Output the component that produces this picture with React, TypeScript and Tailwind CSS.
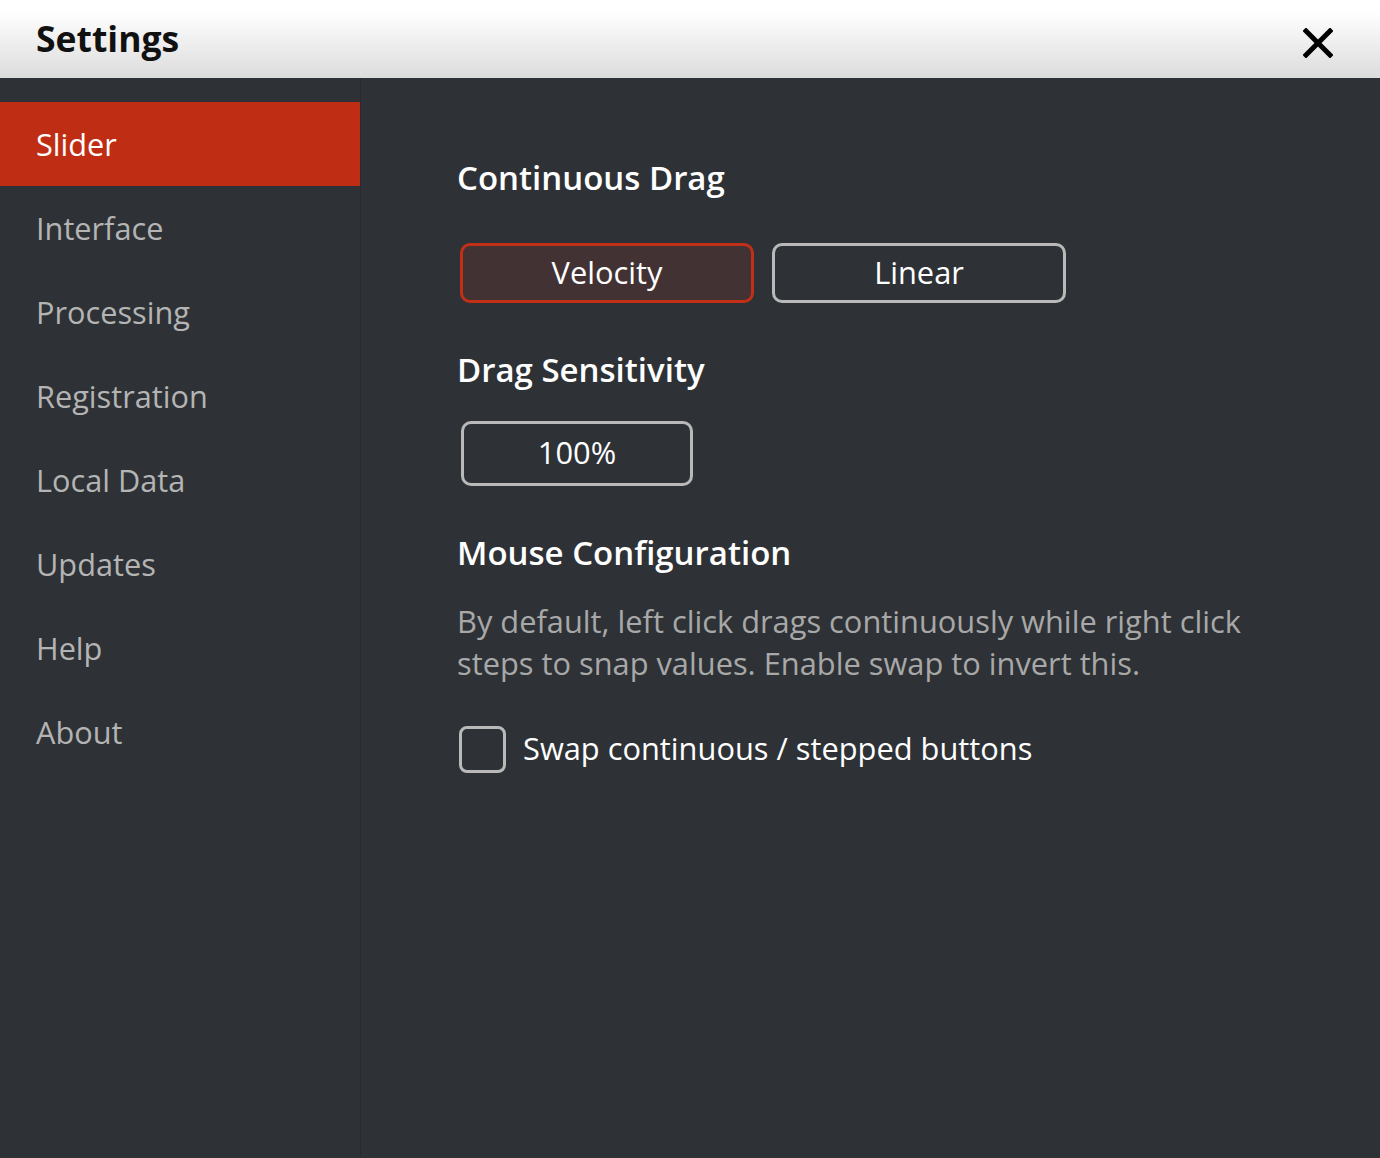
import { useState } from 'react';

const items = ['Slider', 'Interface', 'Processing', 'Registration', 'Local Data', 'Updates', 'Help', 'About'];

export default function App() {
  const [active, setActive] = useState('Slider');
  const [mode, setMode] = useState<'velocity' | 'linear'>('velocity');
  const [swap, setSwap] = useState(false);

  return (
    <div className="flex h-[1158px] w-[1380px] flex-col bg-[#2e3236] font-['Open_Sans',sans-serif]">
      {/* Header */}
      <header className="flex h-[78px] shrink-0 items-center justify-between bg-gradient-to-b from-white from-[15%] to-[#dcdcdc] pl-[36px] pr-[47px]">
        <h1 className="text-[35.5px] font-bold text-[#111]">Settings</h1>
        <button className="mt-[8px] text-black">
          <svg width="30" height="30" viewBox="0 0 30 30">
            <path d="M3 3 L27 27 M27 3 L3 27" stroke="currentColor" strokeWidth="5" strokeLinecap="square" />
          </svg>
        </button>
      </header>

      <div className="flex flex-1">
        {/* Sidebar */}
        <nav className="w-[361px] shrink-0 border-r border-[#272a2e] pt-6">
          {items.map((item) => (
            <button
              key={item}
              onClick={() => setActive(item)}
              className={
                'flex h-[84px] w-full items-center pl-[36px] text-left text-[30.7px] ' +
                (active === item ? 'bg-[#bf2e14] text-white' : 'text-[#b4b4b4]')
              }
            >
              {item}
            </button>
          ))}
        </nav>

        {/* Content */}
        <main className="flex-1 pl-[96px] pt-[74px]">
          <h2 className="text-[33px] font-semibold leading-[52px] text-white">Continuous Drag</h2>
          <div className="ml-[3px] mt-[39px] flex gap-[18px]">
            <button
              onClick={() => setMode('velocity')}
              className={
                'h-[60px] w-[294px] rounded-[10px] border-[3px] pb-[2px] text-[30.8px] text-white ' +
                (mode === 'velocity' ? 'border-[#c12f17] bg-[#433234]' : 'border-[#b9b9b9]')
              }
            >
              Velocity
            </button>
            <button
              onClick={() => setMode('linear')}
              className={
                'h-[60px] w-[294px] rounded-[10px] border-[3px] pb-[2px] text-[30.8px] text-white ' +
                (mode === 'linear' ? 'border-[#c12f17] bg-[#433234]' : 'border-[#b9b9b9]')
              }
            >
              Linear
            </button>
          </div>

          <h2 className="mt-[41px] text-[33px] font-semibold leading-[52px] text-white">Drag Sensitivity</h2>
          <div className="ml-[4px] mt-[25px] flex h-[65px] w-[232px] items-center justify-center rounded-[10px] border-[3px] border-[#b9b9b9] pb-[2px] text-[30.8px] text-white">
            100%
          </div>

          <h2 className="mt-[41px] text-[33px] font-semibold leading-[52px] text-white">Mouse Configuration</h2>
          <p className="mt-[21px] w-[860px] text-[30.8px] leading-[42px] text-[#a8a8a8]">
            By default, left click drags continuously while right click steps to snap values. Enable swap to invert this.
          </p>

          <label className="ml-[2px] mt-[41px] flex cursor-pointer items-center gap-[17px]">
            <input type="checkbox" checked={swap} onChange={(e) => setSwap(e.target.checked)} className="sr-only" />
            <span className="flex h-[47px] w-[47px] items-center justify-center rounded-[8px] border-[3px] border-[#b9b9b9]">
              {swap && (
                <svg width="28" height="28" viewBox="0 0 24 24">
                  <path d="M4 12 L10 18 L20 6" fill="none" stroke="white" strokeWidth="3" />
                </svg>
              )}
            </span>
            <span className="pb-[2px] text-[30.8px] text-white">Swap continuous / stepped buttons</span>
          </label>
        </main>
      </div>
    </div>
  );
}
